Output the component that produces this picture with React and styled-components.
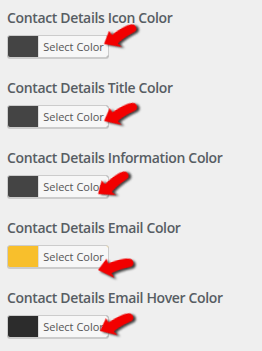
import React from "react";
import styled, { createGlobalStyle } from "styled-components";

const GlobalStyle = createGlobalStyle`
  body {
    margin: 0;
    background: #efefef;
    font-family: "Open Sans", "Noto Sans", sans-serif;
  }
`;

const Page = styled.div`
  padding: 8px 0 0 7px;
  width: 262px;
  height: 351px;
  box-sizing: border-box;
  overflow: hidden;
`;

const Section = styled.div`
  display: flex;
  flex-direction: column;
  align-items: flex-start;
  gap: 7px;
  margin-bottom: 20px;
`;

const Title = styled.div`
  font-size: 14px;
  line-height: 20px;
  font-weight: 600;
  color: #575d63;
  letter-spacing: -0.35px;
  white-space: nowrap;
`;

const PickerWrap = styled.div`
  position: relative;
`;

const ColorButton = styled.button`
  display: flex;
  align-items: stretch;
  height: 23px;
  padding: 0;
  border: 1px solid #ccc;
  border-radius: 3px;
  box-shadow: 0 1px 0 #ccc;
  background: ${p => p.swatch};
  overflow: hidden;
  cursor: pointer;
`;

const Swatch = styled.span`
  width: 30px;
`;

const Label = styled.span`
  display: flex;
  align-items: center;
  justify-content: center;
  width: 69px;
  background: #f7f7f7;
  border-left: 1px solid #ddd;
  font-family: "Open Sans", "Noto Sans", sans-serif;
  font-size: 11px;
  color: #555;
  white-space: nowrap;
`;

const ArrowSvg = styled.svg`
  position: absolute;
  overflow: visible;
  pointer-events: none;
  transform-origin: 2px 12px;
  filter: drop-shadow(2px 2px 1px rgba(0, 0, 0, 0.75));
`;

const Arrow = ({ x, y, angle }) => (
  <ArrowSvg
    width="40"
    height="24"
    viewBox="-2 -12 40 24"
    style={{ left: x - 2, top: y - 12, transform: `rotate(${-angle}deg)` }}
  >
    <path
      d="M0 0 L10 -10 L11 -5 C18 -7 26 -8 32 -7 C37.5 -6.5 37.5 1.5 32 1.5 C25 2 18 3 13 5 L15 10 Z"
      fill="#f20000"
    />
  </ArrowSvg>
);

const rows = [
  { title: "Contact Details Icon Color", color: "#444444", arrow: { x: 97, y: 9, angle: 24 } },
  { title: "Contact Details Title Color", color: "#444444", arrow: { x: 97, y: 16, angle: 21 } },
  { title: "Contact Details Information Color", color: "#444444", arrow: { x: 91, y: 19, angle: 30 } },
  { title: "Contact Details Email Color", color: "#f8bf2c", arrow: { x: 91, y: 25, angle: 8 } },
  { title: "Contact Details Email Hover Color", color: "#2c2c2c", arrow: { x: 93, y: 16, angle: 20 } },
];

const App = () => (
  <Page>
    <GlobalStyle />
    {rows.map(row => (
      <Section key={row.title}>
        <Title>{row.title}</Title>
        <PickerWrap>
          <ColorButton swatch={row.color}>
            <Swatch />
            <Label>Select Color</Label>
          </ColorButton>
          <Arrow {...row.arrow} />
        </PickerWrap>
      </Section>
    ))}
  </Page>
);

export default App;
